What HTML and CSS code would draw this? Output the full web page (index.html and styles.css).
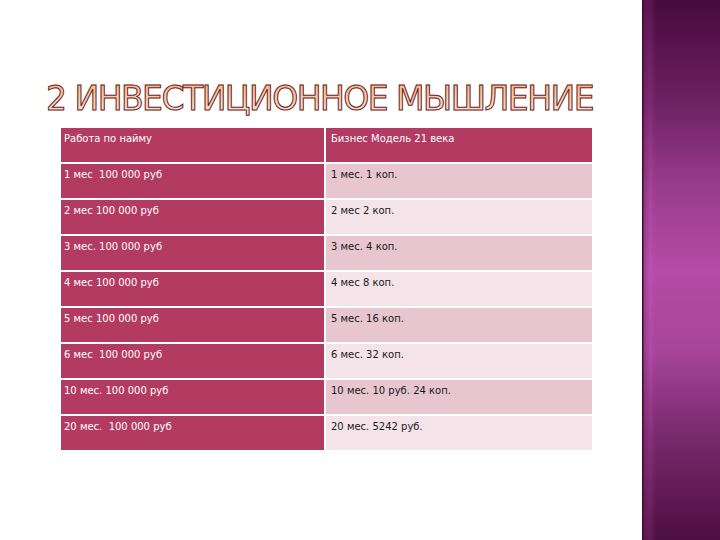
FILE: index.html
```html
<!DOCTYPE html>
<html lang="ru">
<head>
<meta charset="utf-8">
<title>2 Инвестиционное мышление</title>
<link rel="stylesheet" href="styles.css">
</head>
<body>
<div class="slide">
  <main class="content">
    <h1 class="title">2 ИНВЕСТИЦИОННОЕ МЫШЛЕНИЕ</h1>
    <div class="table">
      <div class="cell left head">Работа по найму</div>
      <div class="cell right head">Бизнес Модель 21 века</div>
      <div class="cell left">1 мес&nbsp; 100 000 руб</div>
      <div class="cell right odd">1 мес. 1 коп.</div>
      <div class="cell left">2 мес 100 000 руб</div>
      <div class="cell right even">2 мес 2 коп.</div>
      <div class="cell left">3 мес. 100 000 руб</div>
      <div class="cell right odd">3 мес. 4 коп.</div>
      <div class="cell left">4 мес 100 000 руб</div>
      <div class="cell right even">4 мес 8 коп.</div>
      <div class="cell left">5 мес 100 000 руб</div>
      <div class="cell right odd">5 мес. 16 коп.</div>
      <div class="cell left">6 мес&nbsp; 100 000 руб</div>
      <div class="cell right even">6 мес. 32 коп.</div>
      <div class="cell left">10 мес. 100 000 руб</div>
      <div class="cell right odd">10 мес. 10 руб. 24 коп.</div>
      <div class="cell left">20 мес.&nbsp; 100 000 руб</div>
      <div class="cell right even">20 мес. 5242 руб.</div>
    </div>
  </main>
  <aside class="sidebar"></aside>
</div>
</body>
</html>
```

FILE: styles.css
```css
html, body {
  margin: 0;
  padding: 0;
  background: #ffffff;
}

.slide {
  width: 720px;
  height: 540px;
  display: flex;
  overflow: hidden;
}

.content {
  width: 642px;
  flex: none;
  padding: 80px 0 0 46px;
  box-sizing: border-box;
}

.title {
  margin: 0;
  font-family: "DejaVu Sans", sans-serif;
  font-weight: normal;
  font-size: 33px;
  line-height: 38px;
  white-space: nowrap;
  letter-spacing: -1.5px;
  background: linear-gradient(180deg, #f4b77e 0%, #f9d3ad 55%, #fdebd8 100%);
  -webkit-background-clip: text;
  background-clip: text;
  color: transparent;
  -webkit-text-stroke: 1px #6a2535;
}

.table {
  margin: 10px 0 0 15px;
  width: 531px;
  display: grid;
  grid-template-columns: 263px 266px;
  grid-auto-rows: 34px;
  gap: 2px;
  font-family: "DejaVu Sans", sans-serif;
  font-size: 10px;
  line-height: 14px;
}

.cell {
  padding: 4px 4px 0 3px;
  white-space: nowrap;
}

.left, .head {
  background: #b33b62;
  color: #ffffff;
}

.right {
  color: #1a1a1a;
  padding-left: 5px;
}

.right.head {
  color: #ffffff;
}

.odd {
  background: #e7c6d0;
}

.even {
  background: #f4e4e9;
}

.sidebar {
  flex: 1;
  height: 540px;
  background:
    linear-gradient(90deg, #3b0c32 0px, #3b0c32 1px, rgba(120, 40, 110, 0.35) 2px, rgba(255, 120, 230, 0.12) 8px, rgba(0, 0, 0, 0) 14px),
    linear-gradient(180deg, #480a3d 0%, #6a2060 18%, #9a3c8e 35%, #b44ba6 50%, #a6449a 65%, #7a2a6e 80%, #4d0e41 100%);
}
```
